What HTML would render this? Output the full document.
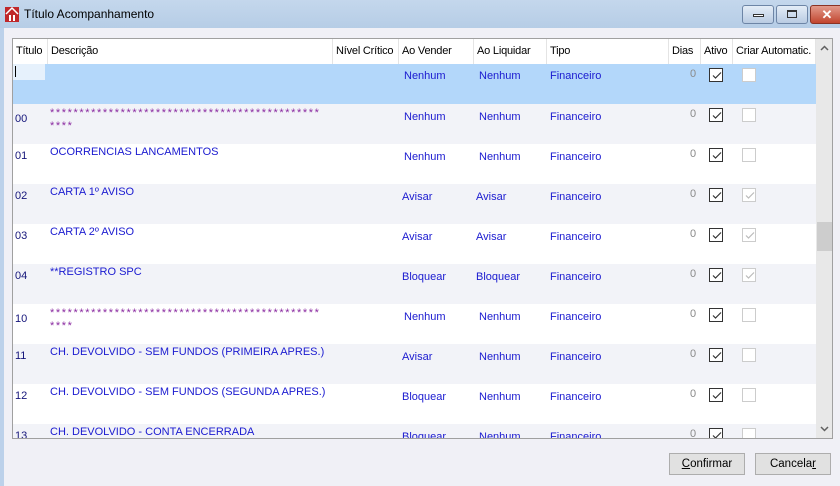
<!DOCTYPE html>
<html><head><meta charset="utf-8"><style>
*{margin:0;padding:0;box-sizing:border-box}
body{width:840px;height:486px;overflow:hidden;background:#f0f0f6;font-family:"Liberation Sans",Tahoma,sans-serif;font-size:11px;position:relative}
.tb{position:absolute;left:0;top:0;width:840px;height:28px;background:linear-gradient(#c4d7ec,#b6cde6)}
.lb{position:absolute;left:0;top:28px;width:4px;height:458px;background:#bcd1ea}
.title{position:absolute;left:24px;top:7px;font-size:12px;color:#000}
.logo{position:absolute;left:5px;top:7px;width:14px;height:15px}
.wb{position:absolute;top:5px;height:19px;border:1px solid #6d85a6;border-radius:3px;background:linear-gradient(#e4edf7,#b9cbe2)}
.grid{position:absolute;left:12px;top:38px;width:821px;height:401px;border:1px solid #a0a0a0;background:#fff;overflow:hidden}
.hd{position:absolute;top:0;height:25px;line-height:25px;font-size:11px;letter-spacing:-0.2px;white-space:nowrap;overflow:hidden;color:#000;padding-left:3px;border-right:1px solid #e4e4e4;background:#fff}
.row{position:absolute;left:0;width:804px;height:40px}
.c{position:absolute;top:4px;color:#1a1ad0;line-height:13px;white-space:nowrap}
.ast{color:#8a2aa0;letter-spacing:1.6px;line-height:13px}
.code{color:#14147a;top:7px}
.cb{position:absolute;top:4px;width:14px;height:14px;border:1px solid #333;background:#fff}
.cb2{border-color:#ccc}
.cb svg{position:absolute;left:1px;top:1px}
.sb{position:absolute;left:803px;top:0;width:17px;height:399px;background:#e8e8e8}
.btn{position:absolute;top:453px;width:76px;height:22px;border:1px solid #adadad;background:#e1e1e1;text-align:center;line-height:20px;font-size:11.5px}
</style></head><body>
<div class="tb"></div><div class="lb"></div>
<svg class="logo" viewBox="0 0 14 15"><rect width="14" height="15" fill="#c0282a"/><path d="M1 7 L7 1 L13 7" stroke="#fff" stroke-width="1.5" fill="none"/><rect x="4" y="8" width="2" height="6" fill="#fff"/><rect x="8" y="8" width="2" height="6" fill="#fff"/></svg>
<div class="title">Título Acompanhamento</div>
<div class="wb" style="left:742px;width:32px"><div style="position:absolute;left:10px;top:8px;width:11px;height:3px;border:1px solid #333;background:#fff"></div></div>
<div class="wb" style="left:776px;width:32px"><div style="position:absolute;left:10px;top:4px;width:10px;height:8px;border:1px solid #333;border-top-width:2px"></div></div>
<div class="wb" style="left:810px;width:34px;background:linear-gradient(#e29b8c,#c2452f);border-color:#8a3325;color:#fff;font-weight:bold;font-size:13px;text-align:center;line-height:17px">✕</div>
<div class="grid">
<div class="hd" style="left:0;width:35px">Título</div>
<div class="hd" style="left:35px;width:285px">Descrição</div>
<div class="hd" style="left:320px;width:66px">Nível Crítico</div>
<div class="hd" style="left:386px;width:75px">Ao Vender</div>
<div class="hd" style="left:461px;width:73px">Ao Liquidar</div>
<div class="hd" style="left:534px;width:122px">Tipo</div>
<div class="hd" style="left:656px;width:32px">Dias</div>
<div class="hd" style="left:688px;width:32px">Ativo</div>
<div class="hd" style="left:720px;width:83px">Criar Automatic.</div>

<div class="row" style="top:25px;background:#b3d7fa"><div style="position:absolute;left:0;top:0;width:32px;height:16px;background:#e6f1fc"></div><div style="position:absolute;left:2px;top:2px;width:1px;height:11px;background:#000"></div><div class="c" style="left:391px;top:6px">Nenhum</div><div class="c" style="left:466px;top:6px">Nenhum</div><div class="c" style="left:537px;top:6px">Financeiro</div><div class="c" style="left:677px;top:4px;color:#8a8a8a">0</div><div class="cb" style="left:696px"><svg width="11" height="11"><path d="M2 5.5 L4.5 8 L10 2.5" stroke="#333" stroke-width="1.2" fill="none"/></svg></div><div class="cb cb2" style="left:729px"></div></div>

<div class="row" style="top:65px;background:#f2f3f8"><div class="c code" style="left:2px;top:9px">00</div><div class="c ast" style="left:37px;top:3px">**********************************************<br>****</div><div class="c" style="left:391px;top:7px">Nenhum</div><div class="c" style="left:466px;top:7px">Nenhum</div><div class="c" style="left:537px;top:7px">Financeiro</div><div class="c" style="left:677px;top:4px;color:#8a8a8a">0</div><div class="cb" style="left:696px"><svg width="11" height="11"><path d="M2 5.5 L4.5 8 L10 2.5" stroke="#333" stroke-width="1.2" fill="none"/></svg></div><div class="cb cb2" style="left:729px"></div></div>

<div class="row" style="top:105px;background:#fff"><div class="c code" style="left:2px;top:6px">01</div><div class="c" style="left:37px;top:2px">OCORRENCIAS LANCAMENTOS</div><div class="c" style="left:391px;top:7px">Nenhum</div><div class="c" style="left:466px;top:7px">Nenhum</div><div class="c" style="left:537px;top:7px">Financeiro</div><div class="c" style="left:677px;top:4px;color:#8a8a8a">0</div><div class="cb" style="left:696px"><svg width="11" height="11"><path d="M2 5.5 L4.5 8 L10 2.5" stroke="#333" stroke-width="1.2" fill="none"/></svg></div><div class="cb cb2" style="left:729px"></div></div>

<div class="row" style="top:145px;background:#f2f3f8"><div class="c code" style="left:2px;top:6px">02</div><div class="c" style="left:37px;top:2px">CARTA 1º AVISO</div><div class="c" style="left:389px;top:7px">Avisar</div><div class="c" style="left:463px;top:7px">Avisar</div><div class="c" style="left:537px;top:7px">Financeiro</div><div class="c" style="left:677px;top:4px;color:#8a8a8a">0</div><div class="cb" style="left:696px"><svg width="11" height="11"><path d="M2 5.5 L4.5 8 L10 2.5" stroke="#333" stroke-width="1.2" fill="none"/></svg></div><div class="cb cb2" style="left:729px"><svg width="11" height="11"><path d="M2 5.5 L4.5 8 L10 2.5" stroke="#bbb" stroke-width="1.2" fill="none"/></svg></div></div>

<div class="row" style="top:185px;background:#fff"><div class="c code" style="left:2px;top:6px">03</div><div class="c" style="left:37px;top:2px">CARTA 2º AVISO</div><div class="c" style="left:389px;top:7px">Avisar</div><div class="c" style="left:463px;top:7px">Avisar</div><div class="c" style="left:537px;top:7px">Financeiro</div><div class="c" style="left:677px;top:4px;color:#8a8a8a">0</div><div class="cb" style="left:696px"><svg width="11" height="11"><path d="M2 5.5 L4.5 8 L10 2.5" stroke="#333" stroke-width="1.2" fill="none"/></svg></div><div class="cb cb2" style="left:729px"><svg width="11" height="11"><path d="M2 5.5 L4.5 8 L10 2.5" stroke="#bbb" stroke-width="1.2" fill="none"/></svg></div></div>

<div class="row" style="top:225px;background:#f2f3f8"><div class="c code" style="left:2px;top:6px">04</div><div class="c" style="left:37px;top:2px">**REGISTRO SPC</div><div class="c" style="left:389px;top:7px">Bloquear</div><div class="c" style="left:463px;top:7px">Bloquear</div><div class="c" style="left:537px;top:7px">Financeiro</div><div class="c" style="left:677px;top:4px;color:#8a8a8a">0</div><div class="cb" style="left:696px"><svg width="11" height="11"><path d="M2 5.5 L4.5 8 L10 2.5" stroke="#333" stroke-width="1.2" fill="none"/></svg></div><div class="cb cb2" style="left:729px"><svg width="11" height="11"><path d="M2 5.5 L4.5 8 L10 2.5" stroke="#bbb" stroke-width="1.2" fill="none"/></svg></div></div>

<div class="row" style="top:265px;background:#fff"><div class="c code" style="left:2px;top:9px">10</div><div class="c ast" style="left:37px;top:3px">**********************************************<br>****</div><div class="c" style="left:391px;top:7px">Nenhum</div><div class="c" style="left:466px;top:7px">Nenhum</div><div class="c" style="left:537px;top:7px">Financeiro</div><div class="c" style="left:677px;top:4px;color:#8a8a8a">0</div><div class="cb" style="left:696px"><svg width="11" height="11"><path d="M2 5.5 L4.5 8 L10 2.5" stroke="#333" stroke-width="1.2" fill="none"/></svg></div><div class="cb cb2" style="left:729px"></div></div>

<div class="row" style="top:305px;background:#f2f3f8"><div class="c code" style="left:2px;top:6px">11</div><div class="c" style="left:37px;top:2px">CH. DEVOLVIDO - SEM FUNDOS (PRIMEIRA APRES.)</div><div class="c" style="left:389px;top:7px">Avisar</div><div class="c" style="left:466px;top:7px">Nenhum</div><div class="c" style="left:537px;top:7px">Financeiro</div><div class="c" style="left:677px;top:4px;color:#8a8a8a">0</div><div class="cb" style="left:696px"><svg width="11" height="11"><path d="M2 5.5 L4.5 8 L10 2.5" stroke="#333" stroke-width="1.2" fill="none"/></svg></div><div class="cb cb2" style="left:729px"></div></div>

<div class="row" style="top:345px;background:#fff"><div class="c code" style="left:2px;top:6px">12</div><div class="c" style="left:37px;top:2px">CH. DEVOLVIDO - SEM FUNDOS (SEGUNDA APRES.)</div><div class="c" style="left:389px;top:7px">Bloquear</div><div class="c" style="left:466px;top:7px">Nenhum</div><div class="c" style="left:537px;top:7px">Financeiro</div><div class="c" style="left:677px;top:4px;color:#8a8a8a">0</div><div class="cb" style="left:696px"><svg width="11" height="11"><path d="M2 5.5 L4.5 8 L10 2.5" stroke="#333" stroke-width="1.2" fill="none"/></svg></div><div class="cb cb2" style="left:729px"></div></div>

<div class="row" style="top:385px;background:#f2f3f8"><div class="c code" style="left:2px;top:6px">13</div><div class="c" style="left:37px;top:2px">CH. DEVOLVIDO - CONTA ENCERRADA</div><div class="c" style="left:389px;top:7px">Bloquear</div><div class="c" style="left:466px;top:7px">Nenhum</div><div class="c" style="left:537px;top:7px">Financeiro</div><div class="c" style="left:677px;top:4px;color:#8a8a8a">0</div><div class="cb" style="left:696px"><svg width="11" height="11"><path d="M2 5.5 L4.5 8 L10 2.5" stroke="#333" stroke-width="1.2" fill="none"/></svg></div><div class="cb cb2" style="left:729px"></div></div>

<div class="sb"><svg style="position:absolute;left:4px;top:6px" width="9" height="6"><path d="M1 5 L4.5 1.5 L8 5" stroke="#606060" stroke-width="1.5" fill="none"/></svg><div style="position:absolute;left:1px;top:183px;width:15px;height:29px;background:#cdcdcd"></div><svg style="position:absolute;left:4px;top:387px" width="9" height="6"><path d="M1 1 L4.5 4.5 L8 1" stroke="#606060" stroke-width="1.5" fill="none"/></svg></div>
</div>
<div class="btn" style="left:669px"><u>C</u>onfirmar</div>
<div class="btn" style="left:755px">Cancela<u>r</u></div>
</body></html>
